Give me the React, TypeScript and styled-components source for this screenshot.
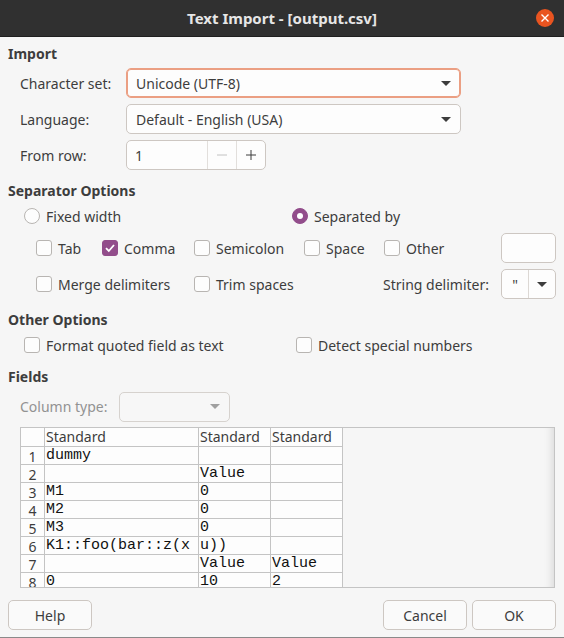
import React from "react";
import styled, { createGlobalStyle } from "styled-components";

// Page reset
const GlobalStyle = createGlobalStyle`
  body {
    margin: 0;
    background: #f6f6f6;
  }
  * {
    box-sizing: border-box;
  }
`;

const Window = styled.div`
  width: 564px;
  height: 638px;
  display: flex;
  flex-direction: column;
  background: #f6f6f6;
  font-family: "Noto Sans", sans-serif;
  font-size: 14px;
  color: #3d3d3d;
  border-bottom: 1px solid #8a8a8a;
  overflow: hidden;
`;

const TitleBar = styled.div`
  height: 37px;
  flex: none;
  background: #303030;
  border-bottom: 1px solid #1f1f1f;
  display: grid;
  grid-template-columns: 1fr auto 1fr;
  align-items: center;
`;

const TitleText = styled.div`
  grid-column: 2;
  color: #e6e6e6;
  font-weight: 700;
  font-size: 15px;
`;

const CloseButton = styled.div`
  grid-column: 3;
  justify-self: end;
  margin-right: 10px;
  width: 18px;
  height: 18px;
  border-radius: 50%;
  background: #e95420;
  display: flex;
  align-items: center;
  justify-content: center;
`;

const Content = styled.div`
  flex: 1;
  display: flex;
  flex-direction: column;
  padding: 7px 8px 0 8px;
`;

const Heading = styled.div<{ $top?: number }>`
  font-weight: 700;
  line-height: 20px;
  height: 20px;
  margin-top: ${p => p.$top ?? 0}px;
`;

const FormGrid = styled.div`
  display: grid;
  grid-template-columns: 106px 335px;
  grid-auto-rows: 30px;
  row-gap: 6px;
  align-items: center;
  padding-left: 12px;
  margin-top: 4px;
`;

const Label = styled.span<{ $disabled?: boolean }>`
  color: ${p => (p.$disabled ? "#929292" : "#3d3d3d")};
  white-space: nowrap;
`;

const Combo = styled.div<{ $focused?: boolean; $disabled?: boolean; $width?: number }>`
  height: 30px;
  width: ${p => (p.$width ? `${p.$width}px` : "100%")};
  display: flex;
  align-items: center;
  padding: 0 9px;
  background: ${p => (p.$disabled ? "#f7f7f7" : "#fdfdfd")};
  border: 1px solid ${p => (p.$focused ? "#eb9f83" : p.$disabled ? "#d6d2ce" : "#cdc7c2")};
  box-shadow: ${p => (p.$focused ? "inset 0 0 0 1px #eb9f83" : "none")};
  border-radius: 5px;
`;

const ComboText = styled.span`
  flex: 1;
  white-space: nowrap;
`;

const Arrow = styled.span<{ $disabled?: boolean }>`
  width: 0;
  height: 0;
  border-left: 5px solid transparent;
  border-right: 5px solid transparent;
  border-top: 5px solid ${p => (p.$disabled ? "#a0a0a0" : "#3d3d3d")};
`;

const Spin = styled.div`
  height: 30px;
  width: 140px;
  display: grid;
  grid-template-columns: 1fr 29px 29px;
  background: #fdfdfd;
  border: 1px solid #cdc7c2;
  border-radius: 5px;
`;

const SpinValue = styled.div`
  display: flex;
  align-items: center;
  padding-left: 8px;
`;

const SpinButton = styled.div`
  display: flex;
  align-items: center;
  justify-content: center;
  border-left: 1px solid #e2dfdc;
`;

const RadioRow = styled.div`
  display: grid;
  grid-template-columns: 268px 1fr;
  height: 20px;
  align-items: center;
  padding-left: 16px;
  margin-top: 5px;
`;

const OptionGrid = styled.div<{ $top: number }>`
  display: grid;
  grid-template-columns: 66px 92px 110px 80px 1fr 55px;
  grid-auto-rows: 30px;
  row-gap: 6px;
  align-items: center;
  padding-left: 28px;
  margin-top: ${p => p.$top}px;
`;

const Option = styled.label<{ $span?: string }>`
  display: flex;
  align-items: center;
  gap: 6px;
  white-space: nowrap;
  grid-column: ${p => p.$span ?? "auto"};
`;

const Box = styled.span<{ $checked?: boolean }>`
  width: 16px;
  height: 16px;
  flex: none;
  border-radius: 3px;
  border: 1px solid ${p => (p.$checked ? "#924d8b" : "#b8b5b2")};
  background: ${p => (p.$checked ? "#924d8b" : "#fdfdfd")};
  display: flex;
  align-items: center;
  justify-content: center;
`;

const RadioDot = styled.span<{ $checked?: boolean }>`
  width: 16px;
  height: 16px;
  flex: none;
  border-radius: 50%;
  border: 1px solid ${p => (p.$checked ? "#924d8b" : "#b8b5b2")};
  background: ${p => (p.$checked ? "#924d8b" : "#fdfdfd")};
  display: flex;
  align-items: center;
  justify-content: center;
  &::after {
    content: "";
    display: ${p => (p.$checked ? "block" : "none")};
    width: 6px;
    height: 6px;
    border-radius: 50%;
    background: #fff;
  }
`;

const TextBox = styled.div`
  height: 30px;
  background: #fdfdfd;
  border: 1px solid #cdc7c2;
  border-radius: 5px;
`;

const DelimLabel = styled.span`
  grid-column: 4 / 6;
  justify-self: end;
  padding-right: 12px;
`;

const DelimCombo = styled.div`
  height: 30px;
  display: grid;
  grid-template-columns: 26px 1fr;
  background: #fdfdfd;
  border: 1px solid #cdc7c2;
  border-radius: 5px;
`;

const DelimValue = styled.div`
  display: flex;
  align-items: center;
  justify-content: center;
`;

const DelimButton = styled.div`
  display: flex;
  align-items: center;
  justify-content: center;
  border-left: 1px solid #dcd8d4;
`;

const OtherRow = styled.div`
  display: grid;
  grid-template-columns: 272px 1fr;
  height: 20px;
  align-items: center;
  padding-left: 16px;
  margin-top: 5px;
`;

const ColumnTypeRow = styled.div`
  display: flex;
  align-items: center;
  gap: 12px;
  height: 29px;
  padding-left: 12px;
  margin-top: 5px;
`;

const Frame = styled.div`
  margin: 6px 1px 0 12px;
  height: 161px;
  border: 1px solid #c4c4c4;
  display: flex;
  overflow: hidden;
  background: #f6f6f6;
  box-shadow: inset -10px 0 8px -8px rgba(0, 0, 0, 0.12);
`;

const Sheet = styled.div`
  display: grid;
  grid-template-columns: 24px 154px 72px 72px;
  grid-template-rows: 19px;
  grid-auto-rows: 18px;
  align-self: flex-start;
`;

const Cell = styled.div<{ $kind?: "head" | "num" | "data" }>`
  background: #fdfdfd;
  border-right: 1px solid #c4c4c4;
  border-bottom: 1px solid #c4c4c4;
  white-space: nowrap;
  overflow: visible;
  position: relative;
  padding-left: ${p => (p.$kind === "num" ? 0 : 1)}px;
  text-align: ${p => (p.$kind === "num" ? "center" : "left")};
  font-family: ${p => (p.$kind === "data" ? '"Liberation Mono", monospace' : '"Noto Sans", sans-serif')};
  font-size: ${p => (p.$kind === "data" ? 15 : 14)}px;
  line-height: ${p => (p.$kind === "num" ? "19px" : "17px")};
  color: ${p => (p.$kind === "data" ? "#111" : "#3d3d3d")};
`;

const Overflow = styled.span`
  position: relative;
  z-index: 1;
`;

const ButtonRow = styled.div`
  display: flex;
  gap: 5px;
  margin-top: 12px;
`;

const Button = styled.div<{ $push?: boolean }>`
  width: 84px;
  height: 30px;
  display: flex;
  align-items: center;
  justify-content: center;
  background: #fafafa;
  border: 1px solid #cdc7c2;
  border-radius: 5px;
  margin-left: ${p => (p.$push ? "auto" : "0")};
`;

const Check = () => (
  <svg width="12" height="12" viewBox="0 0 12 12">
    <path d="M2 6.2 L4.8 9 L10 3" fill="none" stroke="#fff" strokeWidth="1.8" />
  </svg>
);

const CheckBox = ({ label, checked, span }: { label: string; checked?: boolean; span?: string }) => (
  <Option $span={span}>
    <Box $checked={checked}>{checked && <Check />}</Box>
    {label}
  </Option>
);

const Radio = ({ label, checked }: { label: string; checked?: boolean }) => (
  <Option>
    <RadioDot $checked={checked} />
    {label}
  </Option>
);

const rows: string[][] = [
  ["dummy", "", ""],
  ["", "Value", ""],
  ["M1", "0", ""],
  ["M2", "0", ""],
  ["M3", "0", ""],
  ["K1::foo(bar::z(x", "u))", ""],
  ["", "Value", "Value"],
  ["0", "10", "2"],
];

export default function App() {
  return (
    <Window>
      <GlobalStyle />
      <TitleBar>
        <TitleText>Text Import - [output.csv]</TitleText>
        <CloseButton>
          <svg width="8" height="8" viewBox="0 0 8 8">
            <path d="M0.5 0.5 L7.5 7.5 M7.5 0.5 L0.5 7.5" stroke="#fff" strokeWidth="1.4" />
          </svg>
        </CloseButton>
      </TitleBar>
      <Content>
        <Heading>Import</Heading>
        <FormGrid>
          <Label>Character set:</Label>
          <Combo $focused>
            <ComboText>Unicode (UTF-8)</ComboText>
            <Arrow />
          </Combo>
          <Label>Language:</Label>
          <Combo>
            <ComboText>Default - English (USA)</ComboText>
            <Arrow />
          </Combo>
          <Label>From row:</Label>
          <Spin>
            <SpinValue>1</SpinValue>
            <SpinButton>
              <svg width="12" height="12" viewBox="0 0 12 12">
                <path d="M1 6 H11" stroke="#c2c2c2" strokeWidth="1" />
              </svg>
            </SpinButton>
            <SpinButton>
              <svg width="12" height="12" viewBox="0 0 12 12">
                <path d="M1 6 H11 M6 1 V11" stroke="#3d3d3d" strokeWidth="1" />
              </svg>
            </SpinButton>
          </Spin>
        </FormGrid>

        <Heading $top={11}>Separator Options</Heading>
        <RadioRow>
          <Radio label="Fixed width" />
          <Radio label="Separated by" checked />
        </RadioRow>
        <OptionGrid $top={7}>
          <CheckBox label="Tab" />
          <CheckBox label="Comma" checked />
          <CheckBox label="Semicolon" />
          <CheckBox label="Space" />
          <CheckBox label="Other" />
          <TextBox />
          <CheckBox label="Merge delimiters" span="1 / 3" />
          <CheckBox label="Trim spaces" />
          <DelimLabel>String delimiter:</DelimLabel>
          <DelimCombo>
            <DelimValue>"</DelimValue>
            <DelimButton>
              <Arrow />
            </DelimButton>
          </DelimCombo>
        </OptionGrid>

        <Heading $top={11}>Other Options</Heading>
        <OtherRow>
          <CheckBox label="Format quoted field as text" />
          <CheckBox label="Detect special numbers" />
        </OtherRow>

        <Heading $top={12}>Fields</Heading>
        <ColumnTypeRow>
          <Label $disabled>Column type:</Label>
          <Combo $disabled $width={111}>
            <ComboText />
            <Arrow $disabled />
          </Combo>
        </ColumnTypeRow>

        <Frame>
          <Sheet>
            <Cell $kind="num" />
            <Cell $kind="head">Standard</Cell>
            <Cell $kind="head">Standard</Cell>
            <Cell $kind="head">Standard</Cell>
            {rows.map((r, i) => (
              <React.Fragment key={i}>
                <Cell $kind="num">{i + 1}</Cell>
                {r.map((v, j) => (
                  <Cell $kind="data" key={j}>
                    <Overflow>{v}</Overflow>
                  </Cell>
                ))}
              </React.Fragment>
            ))}
          </Sheet>
        </Frame>

        <ButtonRow>
          <Button>Help</Button>
          <Button $push>Cancel</Button>
          <Button>OK</Button>
        </ButtonRow>
      </Content>
    </Window>
  );
}
